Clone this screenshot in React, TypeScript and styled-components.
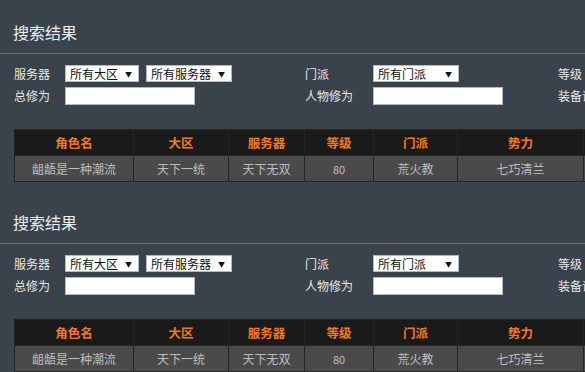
import styled, { createGlobalStyle } from "styled-components";

const GlobalStyle = createGlobalStyle`
	html, body {
		margin: 0;
		padding: 0;
		background: #3a424b;
	}
	body {
		width: 585px;
		height: 372px;
		overflow: hidden;
		font-family: "Noto Sans CJK SC", "Microsoft YaHei", sans-serif;
	}
`;

const Page = styled.div`
	width: 585px;
	overflow: hidden;
`;

const Section = styled.section`
	height: 190px;
`;

const Title = styled.h2`
	margin: 0;
	padding: 20px 13px 0;
	height: 33px;
	font-size: 16px;
	line-height: 24px;
	font-weight: normal;
	color: #eceef0;
	border-bottom: 1px solid #6b7178;
`;

const Form = styled.div`
	display: grid;
	grid-template-columns: 51px 240px 68px 185px auto;
	grid-template-rows: 17px 18px;
	row-gap: 5px;
	padding: 11px 0 0 14px;
	white-space: nowrap;
`;

const Label = styled.span`
	font-size: 12px;
	line-height: 17px;
	color: #e6e8ea;
`;

const Controls = styled.div`
	display: flex;
	gap: 7px;
`;

const Select = styled.div<{ $w: number }>`
	box-sizing: border-box;
	width: ${(p) => p.$w}px;
	height: 17px;
	background: #fff;
	border: 1px solid #b5b9bd;
	display: flex;
	align-items: center;
	justify-content: space-between;
	padding: 0 6px 0 4px;
	font-size: 12px;
	color: #111;
`;

const Arrow = styled.span`
	font-size: 7px;
	color: #111;
`;

const Input = styled.div<{ $w: number }>`
	box-sizing: border-box;
	width: ${(p) => p.$w}px;
	height: 18px;
	background: #fff;
	border: 1px solid #b5b9bd;
`;

const TableWrap = styled.div`
	padding: 24px 0 0 14px;
`;

const Table = styled.table`
	border-collapse: collapse;
	font-size: 12px;
	text-align: center;
	white-space: nowrap;
`;

const Th = styled.th<{ $w: number }>`
	width: ${(p) => p.$w - 1}px;
	min-width: ${(p) => p.$w - 1}px;
	height: 25px;
	padding: 0;
	background: #1a1a1a;
	color: #f27a1d;
	font-weight: bold;
	font-size: 12.5px;
	border: 1px solid #252525;
`;

const Td = styled.td<{ $small?: boolean }>`
	height: 25px;
	padding: 0;
	background: #4a4a4a;
	color: #bdbdbd;
	font-size: ${(p) => (p.$small ? "11px" : "12px")};
	border: 1px solid #262626;
`;

const columns = [
	{ name: "角色名", w: 119 },
	{ name: "大区", w: 95 },
	{ name: "服务器", w: 76 },
	{ name: "等级", w: 69 },
	{ name: "门派", w: 84 },
	{ name: "势力", w: 126 },
	{ name: "装备评分", w: 100 },
];

const row = ["龃龉是一种潮流", "天下一统", "天下无双", "80", "荒火教", "七巧清兰", ""];

function SearchResult(): JSX.Element {
	return (
		<Section>
			<Title>搜索结果</Title>
			<Form>
				<Label>服务器</Label>
				<Controls>
					<Select $w={74}>
						所有大区<Arrow>▼</Arrow>
					</Select>
					<Select $w={86}>
						所有服务器<Arrow>▼</Arrow>
					</Select>
				</Controls>
				<Label>门派</Label>
				<Controls>
					<Select $w={86}>
						所有门派<Arrow>▼</Arrow>
					</Select>
				</Controls>
				<Label>等级</Label>
				<Label>总修为</Label>
				<Controls>
					<Input $w={130} />
				</Controls>
				<Label>人物修为</Label>
				<Controls>
					<Input $w={130} />
				</Controls>
				<Label>装备评分</Label>
			</Form>
			<TableWrap>
				<Table>
					<thead>
						<tr>
							{columns.map((c) => (
								<Th key={c.name} $w={c.w}>
									{c.name}
								</Th>
							))}
						</tr>
					</thead>
					<tbody>
						<tr>
							{row.map((v, i) => (
								<Td key={i} $small={v === "80"}>
									{v}
								</Td>
							))}
						</tr>
					</tbody>
				</Table>
			</TableWrap>
		</Section>
	);
}

export default function App(): JSX.Element {
	return (
		<Page>
			<GlobalStyle />
			<SearchResult />
			<SearchResult />
		</Page>
	);
}
